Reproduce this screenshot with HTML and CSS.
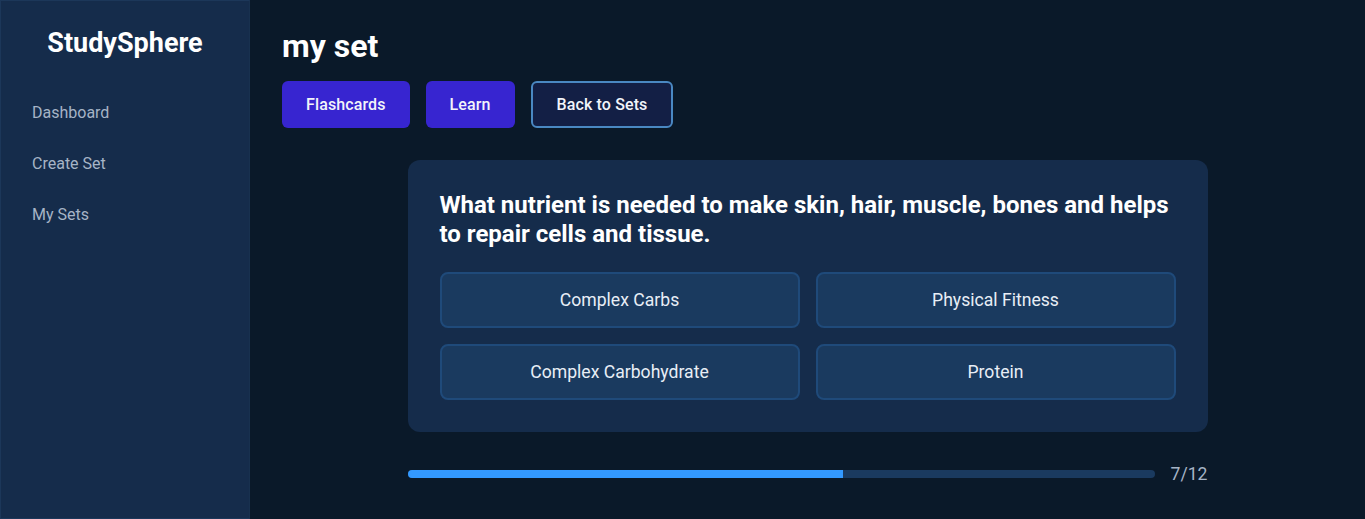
FILE: index.html
```html
<!DOCTYPE html>
<html lang="en">
<head>
<meta charset="utf-8">
<title>StudySphere - my set</title>
<link rel="stylesheet" href="styles.css">
</head>
<body>
<div class="app">
  <aside class="sidebar">
    <div class="brand">StudySphere</div>
    <nav class="nav">
      <a class="nav-link" href="#">Dashboard</a>
      <a class="nav-link" href="#">Create Set</a>
      <a class="nav-link" href="#">My Sets</a>
    </nav>
  </aside>
  <main class="main">
    <h1 class="title">my set</h1>
    <div class="actions">
      <button class="btn btn-primary">Flashcards</button>
      <button class="btn btn-primary">Learn</button>
      <button class="btn btn-outline">Back to Sets</button>
    </div>
    <section class="quiz">
      <div class="card">
        <h2 class="question">What nutrient is needed to make skin, hair, muscle, bones and helps to repair cells and tissue.</h2>
        <div class="options">
          <button class="option">Complex Carbs</button>
          <button class="option">Physical Fitness</button>
          <button class="option">Complex Carbohydrate</button>
          <button class="option">Protein</button>
        </div>
      </div>
      <div class="progress-row">
        <div class="progress-track"><div class="progress-fill" style="width: 58.333%"></div></div>
        <span class="progress-label">7/12</span>
      </div>
    </section>
  </main>
</div>
</body>
</html>
```

FILE: styles.css
```css
* { box-sizing: border-box; }
html, body { margin: 0; padding: 0; height: 100%; }
body {
  font-family: Roboto, "Liberation Sans", Arial, sans-serif;
  background: #0a1929;
  color: #ffffff;
}
.app {
  display: flex;
  min-height: 100vh;
}
.sidebar {
  width: 250px;
  flex-shrink: 0;
  background: #152c4b;
  border: 1px solid #1c3759;
  border-right-color: #18314f;
  padding: 24px 16px;
}
.brand {
  font-size: 27px;
  font-weight: 700;
  text-align: center;
  line-height: 36px;
  margin-bottom: 26px;
}
.nav {
  display: flex;
  flex-direction: column;
}
.nav-link {
  color: #a6b4c6;
  text-decoration: none;
  font-size: 16px;
  line-height: 19px;
  padding: 16px 15px;
}
.main {
  flex: 1;
  padding: 26px 32px 24px;
}
.title {
  font-size: 32px;
  font-weight: 700;
  line-height: 40px;
  margin: 0 0 15px;
}
.actions {
  display: flex;
  gap: 16px;
}
.btn {
  font-family: inherit;
  font-size: 16px;
  font-weight: 500;
  line-height: 19px;
  letter-spacing: 0.12px;
  padding: 14px 24px;
  border-radius: 6px;
  color: #f2f4fa;
  border: 0;
  cursor: pointer;
}
.btn-primary {
  background: #3725d0;
}
.btn-outline {
  background: #131f45;
  border: 2px solid #4a88c2;
  padding: 12px 24px;
}
.quiz {
  max-width: 800px;
  margin: 32px auto 0;
}
.card {
  background: #152c4b;
  border-radius: 12px;
  padding: 32px;
}
.question {
  font-size: 24px;
  font-weight: 700;
  line-height: 28.8px;
  margin: -1px 0 23px;
}
.options {
  display: grid;
  grid-template-columns: 1fr 1fr;
  gap: 16px;
}
.option {
  font-family: inherit;
  font-size: 17.6px;
  color: #e8eef6;
  background: #1a3a5f;
  border: 2px solid #1f4a7a;
  border-radius: 8px;
  height: 56px;
  cursor: pointer;
}
.progress-row {
  display: flex;
  align-items: center;
  gap: 16px;
  margin-top: 32px;
}
.progress-track {
  flex: 1;
  height: 8px;
  background: #1a3a5f;
  border-radius: 4px;
  overflow: hidden;
}
.progress-fill {
  height: 100%;
  background: #3399ff;
}
.progress-label {
  font-size: 17.6px;
  line-height: 21px;
  color: #a6b4c6;
}
```
